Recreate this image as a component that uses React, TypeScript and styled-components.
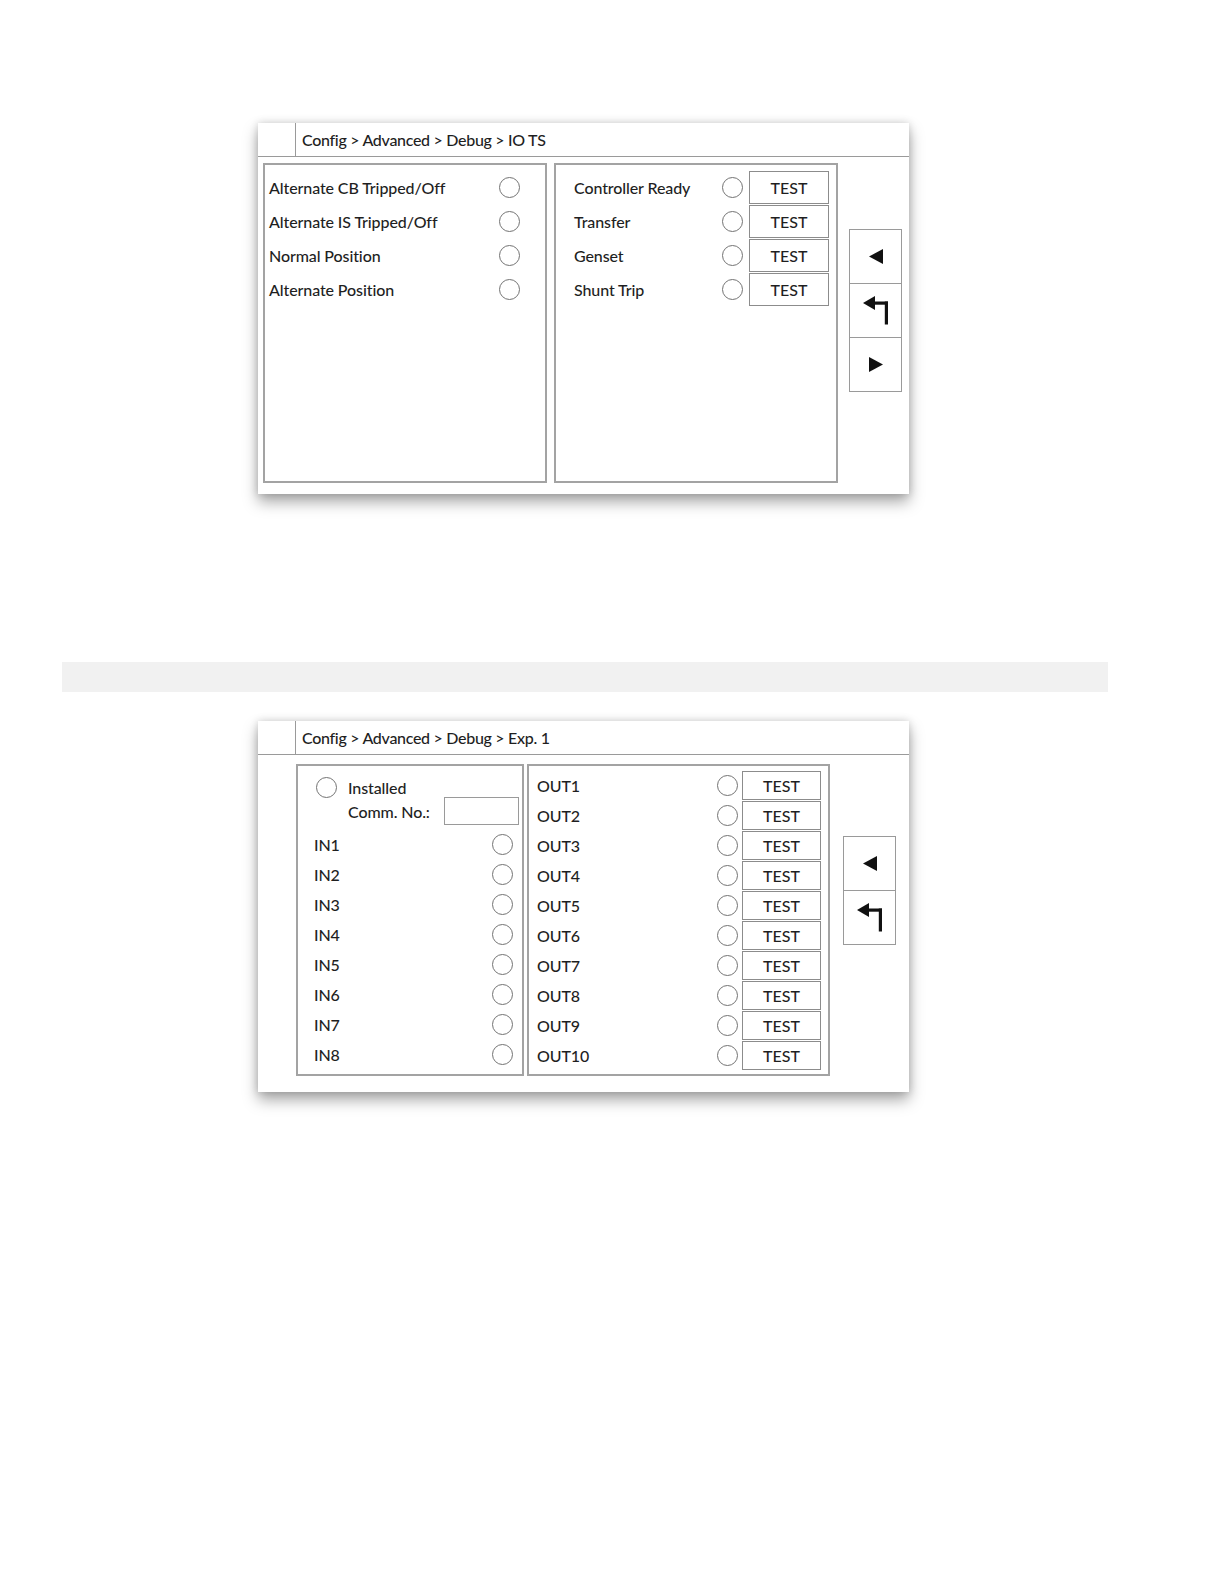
import styled, { createGlobalStyle } from "styled-components";

const GlobalStyle = createGlobalStyle`
  body {
    margin: 0;
    background: #ffffff;
    font-family: Lato, "Open Sans", sans-serif;
    font-weight: 500;
    color: #1f1f1f;
  }
`;

const Page = styled.div`
  display: flex;
  flex-direction: column;
  padding-top: 123px;
  padding-bottom: 120px;
`;

const Screen = styled.div`
  margin-left: 258px;
  width: 651px;
  height: 371px;
  box-sizing: border-box;
  background: #ffffff;
  display: flex;
  flex-direction: column;
  box-shadow: 0 8px 14px rgba(0, 0, 0, 0.34), 0 0 8px rgba(0, 0, 0, 0.16);
`;

const Header = styled.div`
  height: 34px;
  box-sizing: border-box;
  display: flex;
  border-bottom: 1px solid #9a9a9a;
`;

const HeaderCell = styled.div`
  width: 37px;
  border-right: 1px solid #9a9a9a;
`;

const Crumb = styled.div`
  display: flex;
  align-items: center;
  padding-left: 6px;
  font-size: 16px;
  letter-spacing: -0.3px;
`;

const Body = styled.div<{ $pad: string }>`
  flex: 1;
  display: flex;
  align-items: flex-start;
  padding: ${(p) => p.$pad};
`;

const Box = styled.div<{ $w: number; $h: number; $pad: string; $ml?: number }>`
  width: ${(p) => p.$w}px;
  height: ${(p) => p.$h}px;
  margin-left: ${(p) => p.$ml ?? 0}px;
  box-sizing: border-box;
  border: 2px solid #a3a3a3;
  padding: ${(p) => p.$pad};
  display: flex;
  flex-direction: column;
`;

const Row = styled.div<{ $h: number; $cols: string; $gap?: number }>`
  height: ${(p) => p.$h}px;
  display: grid;
  grid-template-columns: ${(p) => p.$cols};
  column-gap: ${(p) => p.$gap ?? 0}px;
  align-items: center;
  font-size: 16px;
`;

const Label = styled.span`
  white-space: nowrap;
  letter-spacing: -0.1px;
`;

const Lamp = styled.span`
  width: 21px;
  height: 21px;
  box-sizing: border-box;
  border-radius: 50%;
  border: 1.5px solid #737373;
`;

const TestButton = styled.button<{ $w: number; $h: number }>`
  width: ${(p) => p.$w}px;
  height: ${(p) => p.$h}px;
  box-sizing: border-box;
  border: 1.5px solid #8c8c8c;
  background: #ffffff;
  font-family: Lato, "Open Sans", sans-serif;
  font-weight: 500;
  font-size: 16px;
  color: #1f1f1f;
  padding: 0;
`;

const Installed = styled.div`
  display: grid;
  grid-template-columns: 21px auto 1fr;
  grid-template-rows: 20px 28px;
  column-gap: 11px;
  align-items: center;
  font-size: 16px;
  margin: 0 -6px 4px 2px;
`;

const CommInput = styled.div`
  justify-self: end;
  width: 75px;
  height: 28px;
  box-sizing: border-box;
  border: 1.5px solid #9a9a9a;
`;

const Nav = styled.div<{ $top: number; $ml: number }>`
  width: 53px;
  margin: ${(p) => p.$top}px 0 0 ${(p) => p.$ml}px;
  box-sizing: border-box;
  border: 1.5px solid #9a9a9a;
  display: flex;
  flex-direction: column;
`;

const NavCell = styled.div`
  height: 53px;
  display: flex;
  align-items: center;
  justify-content: center;
  & + & {
    border-top: 1.5px solid #9a9a9a;
  }
`;

const Divider = styled.div`
  margin: 168px 0 0 62px;
  width: 1046px;
  height: 30px;
  background: #f1f1f1;
`;

const Spacer = styled.div`
  height: 29px;
`;

const LeftArrow = () => (
  <svg width="14" height="15" viewBox="0 0 14 15">
    <polygon points="0,7.5 14,0 14,15" fill="#111" />
  </svg>
);

const RightArrow = () => (
  <svg width="14" height="15" viewBox="0 0 14 15">
    <polygon points="14,7.5 0,0 0,15" fill="#111" />
  </svg>
);

const ReturnArrow = () => (
  <svg width="26" height="29" viewBox="0 0 26 29">
    <polygon points="0,7 12,0 12,14" fill="#111" />
    <rect x="11" y="5.5" width="14" height="3.2" fill="#111" />
    <rect x="21.8" y="5.5" width="3.2" height="23" fill="#111" />
  </svg>
);

const inputs = ["Alternate CB Tripped/Off", "Alternate IS Tripped/Off", "Normal Position", "Alternate Position"];
const outputs = ["Controller Ready", "Transfer", "Genset", "Shunt Trip"];

export default function App() {
  return (
    <Page>
      <GlobalStyle />
      <Screen>
        <Header>
          <HeaderCell />
          <Crumb>Config &gt; Advanced &gt; Debug &gt; IO TS</Crumb>
        </Header>
        <Body $pad="6px 0 0 5px">
          <Box $w={284} $h={320} $pad="5px 25px 0 4px">
            {inputs.map((name) => (
              <Row key={name} $h={34} $cols="1fr 21px">
                <Label>{name}</Label>
                <Lamp />
              </Row>
            ))}
          </Box>
          <Box $w={284} $h={320} $pad="5px 7px 0 18px" $ml={7}>
            {outputs.map((name) => (
              <Row key={name} $h={34} $cols="1fr 21px 80px" $gap={6}>
                <Label>{name}</Label>
                <Lamp />
                <TestButton $w={80} $h={33}>TEST</TestButton>
              </Row>
            ))}
          </Box>
          <Nav $top={66} $ml={11}>
            <NavCell>
              <LeftArrow />
            </NavCell>
            <NavCell>
              <ReturnArrow />
            </NavCell>
            <NavCell>
              <RightArrow />
            </NavCell>
          </Nav>
        </Body>
      </Screen>

      <Divider />
      <Spacer />

      <Screen>
        <Header>
          <HeaderCell />
          <Crumb>Config &gt; Advanced &gt; Debug &gt; Exp. 1</Crumb>
        </Header>
        <Body $pad="9px 0 0 38px">
          <Box $w={228} $h={312} $pad="11px 9px 0 16px">
            <Installed>
              <Lamp />
              <Label>Installed</Label>
              <span />
              <span />
              <Label>Comm. No.:</Label>
              <CommInput />
            </Installed>
            {Array.from({ length: 8 }, (_, i) => (
              <Row key={i} $h={30} $cols="1fr 21px">
                <Label>IN{i + 1}</Label>
                <Lamp />
              </Row>
            ))}
          </Box>
          <Box $w={303} $h={312} $pad="4px 7px 0 8px" $ml={3}>
            {Array.from({ length: 10 }, (_, i) => (
              <Row key={i} $h={30} $cols="1fr 21px 79px" $gap={4}>
                <Label>OUT{i + 1}</Label>
                <Lamp />
                <TestButton $w={79} $h={29}>TEST</TestButton>
              </Row>
            ))}
          </Box>
          <Nav $top={72} $ml={13}>
            <NavCell>
              <LeftArrow />
            </NavCell>
            <NavCell>
              <ReturnArrow />
            </NavCell>
          </Nav>
        </Body>
      </Screen>
    </Page>
  );
}
